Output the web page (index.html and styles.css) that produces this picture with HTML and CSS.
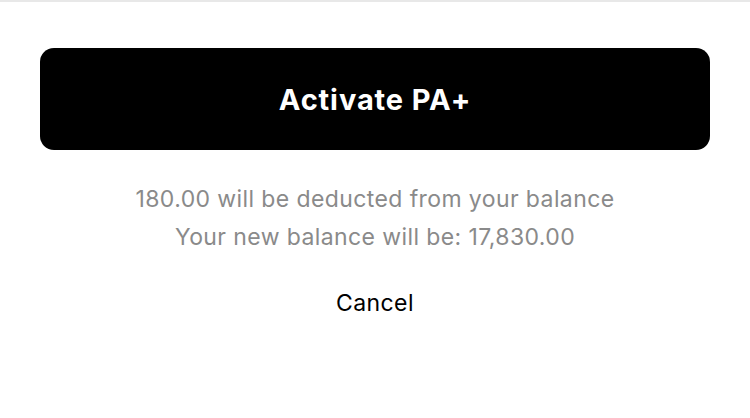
FILE: index.html
```html
<!DOCTYPE html>
<html>
<head>
<meta charset="utf-8">
<link rel="stylesheet" href="styles.css">
</head>
<body>
<div class="sheet">
  <button class="activate">Activate PA+</button>
  <div class="note">
    <p>180.00 will be deducted from your balance</p>
    <p>Your new balance will be: 17,830.00</p>
  </div>
  <button class="cancel">Cancel</button>
</div>
</body>
</html>
```
FILE: styles.css
```css
html, body {
  margin: 0;
  padding: 0;
  background: #fff;
  font-family: Inter, "Noto Sans", sans-serif;
}
.sheet {
  border-top: 2px solid #e8e8e8;
  padding: 46px 40px 0;
  display: flex;
  flex-direction: column;
  align-items: stretch;
}
.activate {
  height: 102px;
  border: none;
  border-radius: 14px;
  background: #000;
  color: #fff;
  font-family: inherit;
  font-size: 29px;
  font-weight: 700;
  letter-spacing: 0.9px;
  padding: 0;
}
.note {
  margin-top: 30px;
  text-align: center;
  color: #8a8a8a;
  font-size: 23px;
  line-height: 38px;
  letter-spacing: 0.4px;
}
.note p { margin: 0; }
.cancel {
  align-self: center;
  margin-top: 33px;
  border: none;
  background: none;
  font-family: inherit;
  font-size: 23px;
  letter-spacing: 0.4px;
  color: #000;
  padding: 0;
  line-height: 28px;
}
```
